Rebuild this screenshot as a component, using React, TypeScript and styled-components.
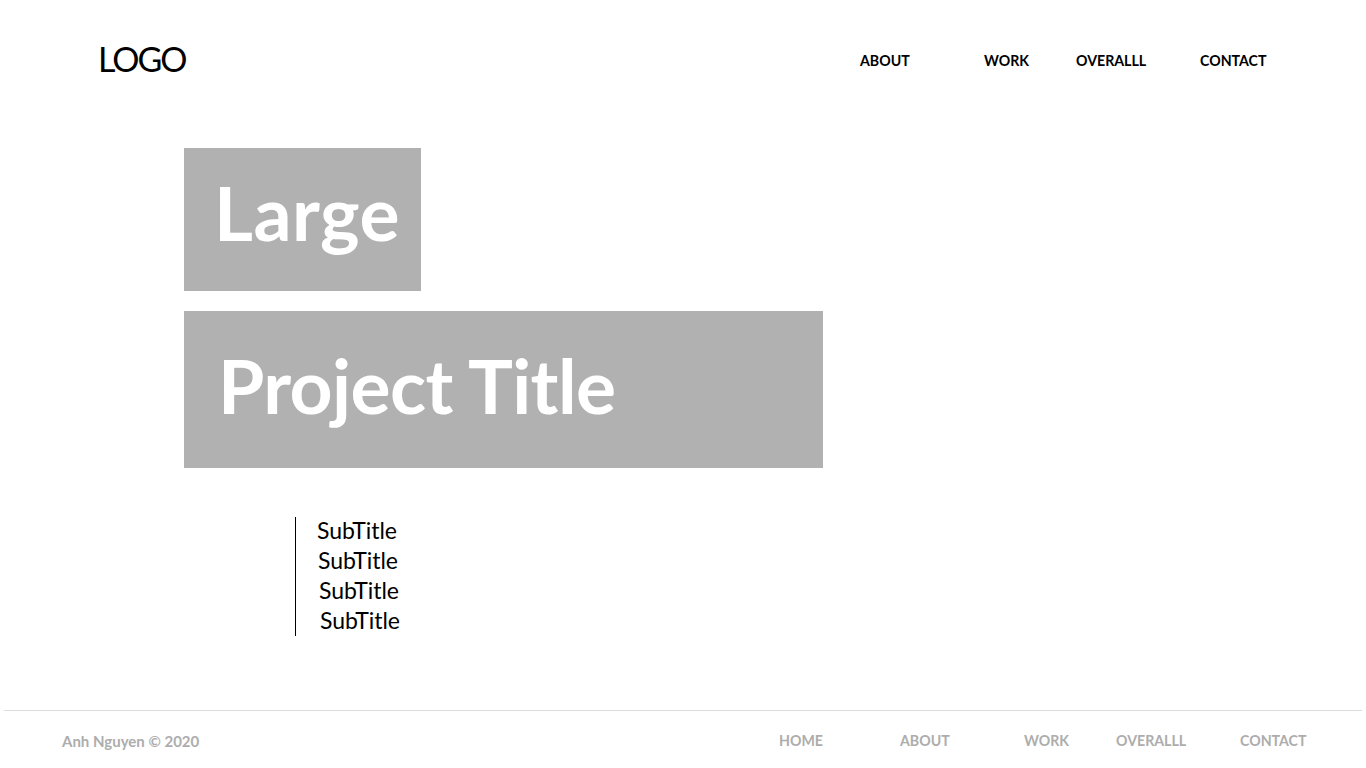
import React from "react";
import styled, { createGlobalStyle } from "styled-components";

const Global = createGlobalStyle`
  html, body { margin: 0; padding: 0; background: #fff; }
  body { font-family: Lato, "Noto Sans", sans-serif; color: #000; }
  * { box-sizing: border-box; }
`;

const Page = styled.div`
  width: 1366px;
  height: 768px;
  display: flex;
  flex-direction: column;
  overflow: hidden;
`;

const Header = styled.header`
  height: 120px;
  display: flex;
  align-items: flex-start;
  padding: 37px 0 0 98px;
`;

const Logo = styled.div`
  width: 762px;
  font-size: 34px;
  font-weight: 400;
  line-height: 44px;
  letter-spacing: -2px;
`;

const Nav = styled.nav<{ $top: number }>`
  display: flex;
  margin-top: ${(p) => p.$top}px;
`;

const NavItem = styled.a<{ $w?: number; $muted?: boolean }>`
  display: block;
  width: ${(p) => (p.$w ? `${p.$w}px` : "auto")};
  font-size: 14.2px;
  font-weight: 700;
  line-height: 18px;
  color: ${(p) => (p.$muted ? "#adadad" : "#000")};
  text-decoration: none;
`;

const Main = styled.main`
  flex: 1;
  display: flex;
  flex-direction: column;
  align-items: flex-start;
  padding: 28px 0 0 184px;
`;

const TitleBlock = styled.div<{
  $w: number;
  $h: number;
  $pl: number;
  $mt?: number;
  $pt: number;
  $ls: number;
}>`
  width: ${(p) => p.$w}px;
  height: ${(p) => p.$h}px;
  margin-top: ${(p) => p.$mt ?? 0}px;
  padding: ${(p) => p.$pt}px 0 0 ${(p) => p.$pl}px;
  background: #b1b1b1;
  color: #fff;
  font-size: 75px;
  font-weight: 700;
  line-height: 90px;
  letter-spacing: ${(p) => p.$ls}px;
`;

const Subs = styled.div`
  margin: 49px 0 0 111px;
  border-left: 1px solid #000;
  height: 119px;
  padding: 0 0 0 21px;
  display: flex;
  flex-direction: column;
  gap: 4px;
`;

const Sub = styled.div<{ $indent: number }>`
  font-size: 23px;
  line-height: 26px;
  padding-left: ${(p) => p.$indent}px;
`;

const Footer = styled.footer`
  margin: 0 4px;
  border-top: 1px solid #dcdcdc;
  height: 58px;
  display: flex;
  align-items: flex-start;
  padding: 21px 0 0 58px;
`;

const Copy = styled.div`
  width: 717px;
  font-size: 15px;
  font-weight: 700;
  line-height: 18px;
  color: #adadad;
`;

export default function App() {
  return (
    <Page>
      <Global />
      <Header>
        <Logo>LOGO</Logo>
        <Nav $top={15}>
          <NavItem $w={124}>ABOUT</NavItem>
          <NavItem $w={92}>WORK</NavItem>
          <NavItem $w={124}>OVERALLL</NavItem>
          <NavItem>CONTACT</NavItem>
        </Nav>
      </Header>
      <Main>
        <TitleBlock $w={237} $h={143} $pl={30} $pt={19} $ls={0.5}>
          Large
        </TitleBlock>
        <TitleBlock $w={639} $h={157} $pl={34} $mt={20} $pt={29} $ls={-0.6}>
          Project Title
        </TitleBlock>
        <Subs>
          <Sub $indent={0}>SubTitle</Sub>
          <Sub $indent={1}>SubTitle</Sub>
          <Sub $indent={2}>SubTitle</Sub>
          <Sub $indent={3}>SubTitle</Sub>
        </Subs>
      </Main>
      <Footer>
        <Copy>Anh Nguyen © 2020</Copy>
        <Nav $top={0}>
          <NavItem $muted $w={121}>HOME</NavItem>
          <NavItem $muted $w={124}>ABOUT</NavItem>
          <NavItem $muted $w={92}>WORK</NavItem>
          <NavItem $muted $w={124}>OVERALLL</NavItem>
          <NavItem $muted>CONTACT</NavItem>
        </Nav>
      </Footer>
    </Page>
  );
}
